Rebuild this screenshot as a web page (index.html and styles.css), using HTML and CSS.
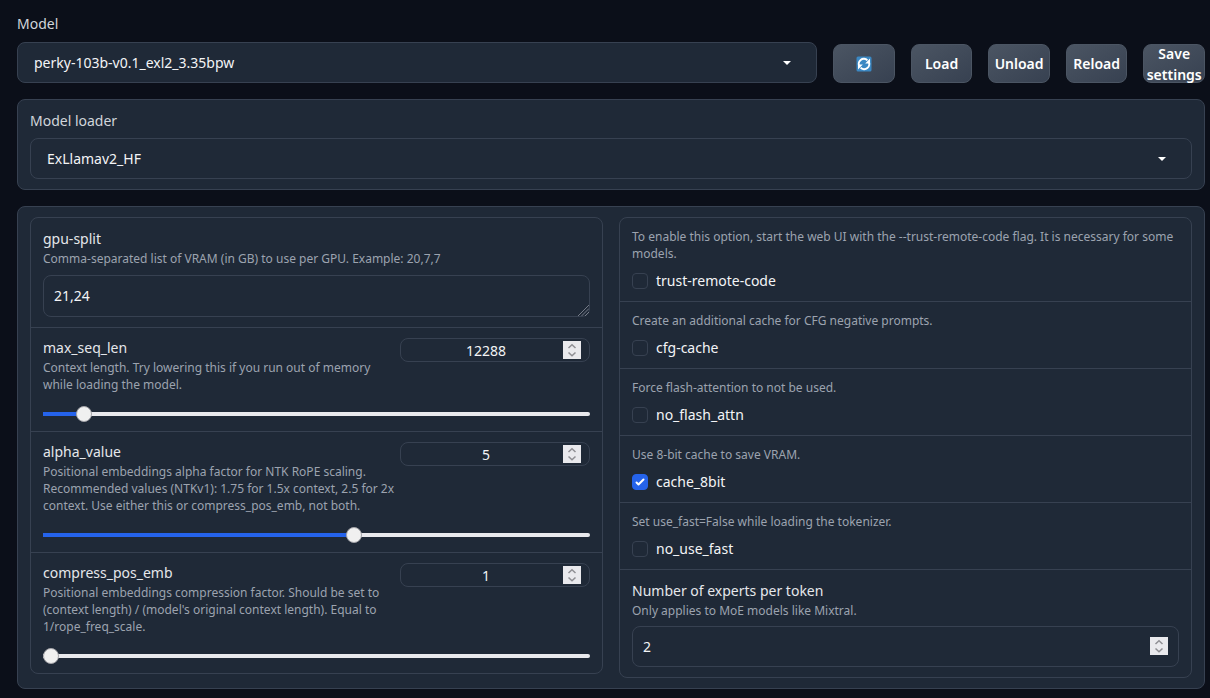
FILE: index.html
```html
<!DOCTYPE html>
<html lang="en">
<head>
<meta charset="utf-8">
<title>Model</title>
<link rel="stylesheet" href="styles.css">
</head>
<body>
<main class="page">
  <div class="toolbar">
    <div class="field toolbar-model">
      <label class="label" for="model">Model</label>
      <select class="select" id="model"><option>perky-103b-v0.1_exl2_3.35bpw</option></select>
    </div>
    <button class="button" type="button" aria-label="Refresh">
      <svg class="refresh-icon" viewBox="0 0 16 16" aria-hidden="true">
        <rect x="0.5" y="0.5" width="15" height="15" rx="1.5" fill="#3b88c3"/>
        <path d="M3.6 10.6A5 5 0 0 1 11.4 4.400M12.400 5.400A5 5 0 0 1 4.600 11.600" fill="none" stroke="#fff" stroke-width="2"/>
        <path d="M14 2.600V7.400H9.200zM2 13.400V8.600H6.800z" fill="#fff"/>
      </svg>
    </button>
    <button class="button" type="button">Load</button>
    <button class="button" type="button">Unload</button>
    <button class="button" type="button">Reload</button>
    <button class="button" type="button">Save settings</button>
  </div>

  <section class="panel field">
    <label class="label" for="loader">Model loader</label>
    <select class="select" id="loader"><option>ExLlamav2_HF</option></select>
  </section>

  <section class="panel columns">
    <div class="group">
      <div class="block">
        <label class="label" for="gpu">gpu-split</label>
        <p class="info">Comma-separated list of VRAM (in GB) to use per GPU. Example: 20,7,7</p>
        <textarea class="textbox" id="gpu" rows="1">21,24</textarea>
      </div>
      <div class="block block-slider">
        <div class="head">
          <div class="head-text">
            <label class="label" for="seq">max_seq_len</label>
            <p class="info">Context length. Try lowering this if you run out of memory while loading the model.</p>
          </div>
          <input class="number number-small" id="seq" type="number" value="12288">
        </div>
        <input class="slider" type="range" aria-label="max_seq_len" min="0" max="196608" step="256" value="12288" style="--fill: 7.5%">
      </div>
      <div class="block block-slider">
        <div class="head">
          <div class="head-text">
            <label class="label" for="alpha">alpha_value</label>
            <p class="info">Positional embeddings alpha factor for NTK RoPE scaling. Recommended values (NTKv1): 1.75 for 1.5x context, 2.5 for 2x context. Use either this or compress_pos_emb, not both.</p>
          </div>
          <input class="number number-small" id="alpha" type="number" value="5">
        </div>
        <input class="slider" type="range" aria-label="alpha_value" min="1" max="8" step="0.05" value="5" style="--fill: 57%">
      </div>
      <div class="block block-slider">
        <div class="head">
          <div class="head-text">
            <label class="label" for="compress">compress_pos_emb</label>
            <p class="info">Positional embeddings compression factor. Should be set to (context length) / (model's original context length). Equal to 1/rope_freq_scale.</p>
          </div>
          <input class="number number-small" id="compress" type="number" value="1">
        </div>
        <input class="slider" type="range" aria-label="compress_pos_emb" min="1" max="8" step="1" value="1" style="--fill: 0%">
      </div>
    </div>

    <div class="group">
      <div class="block">
        <p class="info">To enable this option, start the web UI with the --trust-remote-code flag. It is necessary for some models.</p>
        <label class="check"><input class="checkbox" type="checkbox">trust-remote-code</label>
      </div>
      <div class="block">
        <p class="info">Create an additional cache for CFG negative prompts.</p>
        <label class="check"><input class="checkbox" type="checkbox">cfg-cache</label>
      </div>
      <div class="block">
        <p class="info">Force flash-attention to not be used.</p>
        <label class="check"><input class="checkbox" type="checkbox">no_flash_attn</label>
      </div>
      <div class="block">
        <p class="info">Use 8-bit cache to save VRAM.</p>
        <label class="check"><input class="checkbox" type="checkbox" checked>cache_8bit</label>
      </div>
      <div class="block">
        <p class="info">Set use_fast=False while loading the tokenizer.</p>
        <label class="check"><input class="checkbox" type="checkbox">no_use_fast</label>
      </div>
      <div class="block">
        <label class="label" for="experts">Number of experts per token</label>
        <p class="info">Only applies to MoE models like Mixtral.</p>
        <input class="number number-large" id="experts" type="number" value="2">
      </div>
    </div>
  </section>
</main>
</body>
</html>
```
FILE: styles.css
```css
:root {
  --bg: #0b0f19;
  --panel: #1f2937;
  --line: #374151;
  --text: #f3f4f6;
  --label: #e5e7eb;
  --muted: #9ca3af;
  --accent: #2563eb;
}

* {
  box-sizing: border-box;
}

body {
  margin: 0;
  background: var(--bg);
  color: var(--text);
  font: 14px/21px "Noto Sans", sans-serif;
}

input,
select,
textarea,
button {
  margin: 0;
  color: inherit;
  font: inherit;
}

.page {
  display: flex;
  flex-direction: column;
  gap: 16px;
  padding: 13px 5px 9px 17px;
}

.toolbar {
  display: grid;
  grid-template-columns: minmax(0, 13fr) repeat(5, minmax(0, 1fr));
  align-items: end;
  gap: 16px;
}

.field {
  display: flex;
  flex-direction: column;
  gap: 7px;
}

.toolbar-model {
  gap: 8px;
}

.label {
  display: block;
  color: var(--label);
}

.field .label {
  color: #d1d5db;
}

.select {
  appearance: none;
  width: 100%;
  height: 41px;
  padding: 0 40px 0 16px;
  border: 1px solid var(--line);
  border-radius: 8px;
  background: var(--panel) url("data:image/svg+xml,%3Csvg xmlns='http://www.w3.org/2000/svg' width='8' height='4'%3E%3Cpath d='M0 0h8L4 4z' fill='%23fff'/%3E%3C/svg%3E") no-repeat right 25px center;
}

.button {
  display: flex;
  align-items: center;
  justify-content: center;
  min-width: 0;
  height: 39px;
  padding: 0;
  border: 1px solid #4b5563;
  border-radius: 8px;
  background: linear-gradient(to bottom right, #4b5563, #374151);
  color: #fff;
  font-weight: 600;
}

.refresh-icon {
  width: 16px;
  height: 16px;
}

.panel {
  padding: 10px 12px;
  border: 1px solid var(--line);
  border-radius: 8px;
  background: var(--panel);
}

.columns {
  display: flex;
  align-items: flex-start;
  gap: 16px;
}

.group {
  flex: 1 1 0;
  min-width: 0;
  border: 1px solid var(--line);
  border-radius: 8px;
}

.block {
  padding: 10px 12px;
}

.block + .block {
  border-top: 1px solid var(--line);
}

.block-slider {
  padding-top: 9px;
  padding-bottom: 9px;
}

.info {
  margin: 0;
  color: var(--muted);
  font-size: 12px;
  line-height: 17px;
}

.label + .info {
  margin-top: 1px;
}

.textbox {
  display: block;
  width: 100%;
  height: 42px;
  margin-top: 8px;
  padding: 9px 10px;
  border: 1px solid var(--line);
  border-radius: 8px;
  background: transparent;
  resize: vertical;
}

.textbox::-webkit-resizer {
  background: url("data:image/svg+xml,%3Csvg xmlns='http://www.w3.org/2000/svg' width='12' height='12' fill='none' stroke='%238b919c' stroke-width='0.8'%3E%3Cpath d='M1 12L12 1M4.500 12L12 4.500M8 12l4-4'/%3E%3C/svg%3E") no-repeat right bottom;
}

.head {
  display: flex;
  align-items: flex-start;
  gap: 4px;
}

.head-text {
  flex: 1;
  min-width: 0;
}

.number {
  border: 1px solid var(--line);
  border-radius: 8px;
  background: transparent;
}

.number-small {
  width: 190px;
  height: 24px;
  margin-top: 1px;
  padding: 0 8px;
  line-height: 20px;
  text-align: center;
}

.number-large {
  display: block;
  width: 100%;
  height: 41px;
  margin-top: 7px;
  padding: 0 10px;
}

.number::-webkit-inner-spin-button {
  appearance: none;
  width: 18px;
  height: 18px;
  margin: 0;
  opacity: 1;
  background: #e9e9ed url("data:image/svg+xml,%3Csvg xmlns='http://www.w3.org/2000/svg' width='18' height='18' fill='none' stroke='%238f8f94' stroke-width='1.5'%3E%3Cpath d='M5.5 7L9 3.7 12.5 7M5.5 11.5L9 14.8l3.500-3.300'/%3E%3C/svg%3E");
}

.slider {
  appearance: none;
  display: block;
  width: 100%;
  height: 16px;
  margin-top: 13px;
  background: transparent;
}

.slider::-webkit-slider-runnable-track {
  height: 4px;
  border-radius: 0 2px 2px 0;
  background: linear-gradient(to right, var(--accent) var(--fill), #e9e9ed var(--fill));
}

.slider::-webkit-slider-thumb {
  appearance: none;
  width: 16px;
  height: 16px;
  margin-top: -6px;
  border: 1px solid #a3a3a8;
  border-radius: 50%;
  background: #f0f0f0;
}

.check {
  display: flex;
  align-items: center;
  gap: 8px;
  margin-top: 8px;
}

.checkbox {
  appearance: none;
  width: 16px;
  height: 16px;
  border: 1px solid var(--line);
  border-radius: 4px;
  background: transparent;
}

.checkbox:checked {
  border-color: var(--accent);
  background: var(--accent) url("data:image/svg+xml,%3Csvg xmlns='http://www.w3.org/2000/svg' viewBox='0 0 16 16' fill='%23fff'%3E%3Cpath d='M12.207 4.793a1 1 0 0 1 0 1.414l-5 5a1 1 0 0 1-1.414 0l-2-2a1 1 0 0 1 1.414-1.414L6.500 9.086l4.293-4.293a1 1 0 0 1 1.414 0z'/%3E%3C/svg%3E") center / 16px 16px no-repeat;
}
```
